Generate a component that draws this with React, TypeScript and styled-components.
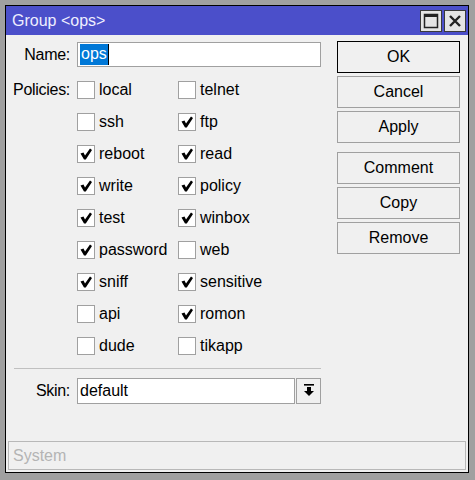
import styled, { createGlobalStyle } from 'styled-components';

const GlobalStyle = createGlobalStyle`
  html, body {
    margin: 0;
    padding: 0;
    background: #a0a0a0;
  }
  body {
    font-family: "Liberation Sans", Arial, sans-serif;
    font-size: 16px;
    color: #000;
  }
`;

const Page = styled.div`
  padding: 5px;
  width: 475px;
  height: 480px;
  box-sizing: border-box;
`;

const Window = styled.div`
  width: 464px;
  height: 468px;
  box-sizing: border-box;
  border: 1px solid #000;
  display: flex;
  flex-direction: column;
`;

const TitleBar = styled.div`
  height: 29px;
  background: #4b4fca;
  display: flex;
  align-items: center;
  padding: 0 2px 0 6px;
`;

const Title = styled.div`
  flex: 1;
  color: #eeeeff;
  font-size: 16px;
`;

const TitleButton = styled.div`
  width: 22px;
  height: 22px;
  box-sizing: border-box;
  border: 1px solid #3a3a3a;
  background: #e4e4e4;
  margin-left: 2px;
  display: flex;
  align-items: center;
  justify-content: center;
`;

const Body = styled.div`
  flex: 1;
  background: #f0f0f0;
  display: flex;
  flex-direction: column;
`;

const Main = styled.div`
  display: flex;
  padding: 0 7px 0 2px;
`;

const Form = styled.div`
  width: 313px;
  display: flex;
  flex-direction: column;
  padding-top: 7px;
`;

const FieldRow = styled.div<{ $top?: number }>`
  display: grid;
  grid-template-columns: 62px 1fr;
  column-gap: 7px;
  align-items: start;
  margin-top: ${(p) => p.$top ?? 0}px;
`;

const Label = styled.div<{ $h: number }>`
  text-align: right;
  height: ${(p) => p.$h}px;
  line-height: ${(p) => p.$h}px;
  letter-spacing: -0.3px;
`;

const TextInput = styled.div<{ $h: number }>`
  height: ${(p) => p.$h}px;
  box-sizing: border-box;
  border: 1px solid #a0a0a0;
  background: #fff;
  display: flex;
  align-items: center;
  padding-left: 2px;
`;

const Selected = styled.span`
  background: #0078d7;
  color: #fff;
  padding: 1px 1px 2px;
  border-right: 1px solid #000;
`;

const CheckGrid = styled.div`
  display: grid;
  grid-template-columns: 101px 101px;
  grid-auto-rows: 32px;
`;

const CheckItem = styled.div`
  display: flex;
  align-items: center;
  gap: 4px;
`;

const Box = styled.div`
  width: 18px;
  height: 18px;
  box-sizing: border-box;
  border: 1px solid #a0a0a0;
  background: #fff;
  display: flex;
  align-items: center;
  justify-content: center;
`;

const Separator = styled.div`
  height: 1px;
  background: #c0c0c0;
  margin: 6px 0 0 6px;
`;

const SkinField = styled.div`
  display: flex;
  gap: 1px;
`;

const DropButton = styled.div`
  width: 25px;
  height: 26px;
  box-sizing: border-box;
  border: 1px solid #a0a0a0;
  background: #f0f0f0;
  display: flex;
  align-items: center;
  justify-content: center;
`;

const Buttons = styled.div`
  margin-left: 16px;
  padding-top: 6px;
  width: 123px;
  display: flex;
  flex-direction: column;
  gap: 3px;
`;

const Button = styled.div<{ $primary?: boolean; $gapBefore?: boolean }>`
  height: 32px;
  box-sizing: border-box;
  border: 1px solid ${(p) => (p.$primary ? '#000' : '#a0a0a0')};
  background: #f0f0f0;
  display: flex;
  align-items: center;
  justify-content: center;
  margin-top: ${(p) => (p.$gapBefore ? 6 : 0)}px;
`;

const Spacer = styled.div`
  flex: 1;
`;

const StatusBar = styled.div`
  margin: 0 2px 2px 2px;
  height: 29px;
  box-sizing: border-box;
  border: 1px solid #b8b8b8;
  color: #b4b4b4;
  display: flex;
  align-items: center;
  padding-left: 4px;
`;

const Check = () => (
  <svg width="14" height="14" viewBox="0 0 14 14">
    <path d="M1.5 6.5 L4.5 5.5 L6 8.5 L11 1.5 L13 3 L6.8 12.5 L5 12.5 Z" fill="#000" />
  </svg>
);

const policies: [string, boolean][] = [
  ['local', false], ['telnet', false],
  ['ssh', false], ['ftp', true],
  ['reboot', true], ['read', true],
  ['write', true], ['policy', true],
  ['test', true], ['winbox', true],
  ['password', true], ['web', false],
  ['sniff', true], ['sensitive', true],
  ['api', false], ['romon', true],
  ['dude', false], ['tikapp', false],
];

export default function App() {
  return (
    <>
      <GlobalStyle />
      <Page>
        <Window>
          <TitleBar>
            <Title>Group &lt;ops&gt;</Title>
            <TitleButton>
              <svg width="16" height="16" viewBox="0 0 16 16">
                <rect x="1.5" y="1.5" width="13" height="13" fill="none" stroke="#222" strokeWidth="1.5" />
                <rect x="1" y="1" width="14" height="3" fill="#222" />
              </svg>
            </TitleButton>
            <TitleButton>
              <svg width="14" height="14" viewBox="0 0 14 14">
                <path d="M2 2 L12 12 M12 2 L2 12" stroke="#222" strokeWidth="2.4" />
              </svg>
            </TitleButton>
          </TitleBar>
          <Body>
            <Main>
              <Form>
                <FieldRow>
                  <Label $h={25}>Name:</Label>
                  <TextInput $h={25}>
                    <Selected>ops</Selected>
                  </TextInput>
                </FieldRow>
                <FieldRow $top={7}>
                  <Label $h={32}>Policies:</Label>
                  <CheckGrid>
                    {policies.map(([name, on]) => (
                      <CheckItem key={name}>
                        <Box>{on && <Check />}</Box>
                        {name}
                      </CheckItem>
                    ))}
                  </CheckGrid>
                </FieldRow>
                <Separator />
                <FieldRow $top={9}>
                  <Label $h={26}>Skin:</Label>
                  <SkinField>
                    <TextInput $h={26} style={{ flex: 1 }}>default</TextInput>
                    <DropButton>
                      <svg width="12" height="14" viewBox="0 0 12 14">
                        <rect x="1" y="0" width="10" height="1.6" fill="#000" />
                        <rect x="4" y="3" width="4" height="4" fill="#000" />
                        <path d="M1 7 L11 7 L6 12 Z" fill="#000" />
                      </svg>
                    </DropButton>
                  </SkinField>
                </FieldRow>
              </Form>
              <Buttons>
                <Button $primary>OK</Button>
                <Button>Cancel</Button>
                <Button>Apply</Button>
                <Button $gapBefore>Comment</Button>
                <Button>Copy</Button>
                <Button>Remove</Button>
              </Buttons>
            </Main>
            <Spacer />
            <StatusBar>System</StatusBar>
          </Body>
        </Window>
      </Page>
    </>
  );
}
